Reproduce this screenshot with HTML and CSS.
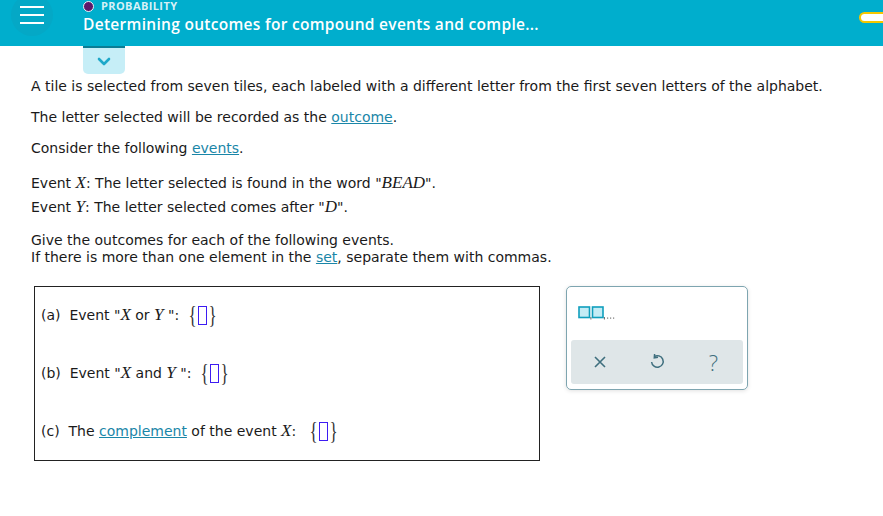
FILE: index.html
```html
<!DOCTYPE html>
<html>
<head>
<meta charset="utf-8">
<link rel="stylesheet" href="styles.css">
</head>
<body>
<header class="topbar">
  <div class="menu">
    <svg width="26" height="20" viewBox="0 0 26 20"><g fill="#fff"><rect x="0" y="1" width="24" height="2"/><rect x="0" y="9" width="24" height="2"/><rect x="0" y="17" width="24" height="2"/></g></svg>
  </div>
  <div class="titles">
    <div class="topic"><span class="dot"></span>PROBABILITY</div>
    <div class="title">Determining outcomes for compound events and comple...</div>
  </div>
  <div class="pill"></div>
</header>
<div class="tabrow">
  <div class="tab">
    <svg width="14" height="9" viewBox="0 0 14 9"><path d="M2 2 L7 7 L12 2" fill="none" stroke="#1ea8c9" stroke-width="2.6" stroke-linecap="round" stroke-linejoin="round"/></svg>
  </div>
</div>
<main class="content">
  <p class="para">A tile is selected from seven tiles, each labeled with a different letter from the first seven letters of the alphabet.</p>
  <p class="para">The letter selected will be recorded as the <a class="lnk">outcome</a>.</p>
  <p class="para">Consider the following <a class="lnk">events</a>.</p>
  <div class="events">
    <div>Event <i class="m">X</i>: The letter selected is found in the word "<i class="m">BEAD</i>".</div>
    <div>Event <i class="m">Y</i>: The letter selected comes after "<i class="m">D</i>".</div>
  </div>
  <div class="instr">
    <div>Give the outcomes for each of the following events.</div>
    <div>If there is more than one element in the <a class="lnk">set</a>, separate them with commas.</div>
  </div>
  <div class="work">
    <div class="answers">
      <div class="q">(a)&nbsp; Event "<i class="m">X</i> or <i class="m">Y</i> ": <span class="set"><span class="br">{</span><span class="slot"></span><span class="br">}</span></span></div>
      <div class="q">(b)&nbsp; Event "<i class="m">X</i> and <i class="m">Y</i> ": <span class="set"><span class="br">{</span><span class="slot"></span><span class="br">}</span></span></div>
      <div class="q">(c)&nbsp; The <a class="lnk">complement</a> of the event <i class="m">X</i>: &nbsp;<span class="set"><span class="br">{</span><span class="slot"></span><span class="br">}</span></span></div>
    </div>
    <div class="pad">
      <div class="padtop">
        <svg class="tmpl" width="42" height="15" viewBox="0 0 42 15"><rect x="1" y="1" width="10.5" height="10.5" fill="#c4ecf5" stroke="#109fbd" stroke-width="1.6"/><rect x="14.5" y="1" width="10.5" height="10.5" fill="#c4ecf5" stroke="#109fbd" stroke-width="1.6"/><rect x="12.4" y="11" width="1" height="2.5" fill="#666"/><rect x="25.9" y="11" width="1" height="2.5" fill="#666"/><g fill="#777"><rect x="29" y="11.5" width="1.2" height="1.2"/><rect x="32" y="11.5" width="1.2" height="1.2"/><rect x="35" y="11.5" width="1.2" height="1.2"/></g></svg>
      </div>
      <div class="padbtns">
        <span class="btn"><svg width="14" height="14" viewBox="0 0 14 14"><path d="M2 2 L12 12 M12 2 L2 12" stroke="#3f6f7e" stroke-width="1.6"/></svg></span>
        <span class="btn"><svg width="16" height="18" viewBox="0 0 16 18"><path d="M5.2 3.6 A5.8 5.8 0 1 1 2.6 9" fill="none" stroke="#3f6f7e" stroke-width="1.5"/><path d="M5.6 1 L5.3 4.8 L9 4.2" fill="none" stroke="#3f6f7e" stroke-width="1.5"/></svg></span>
        <span class="btn qm">?</span>
      </div>
    </div>
  </div>
</main>
</body>
</html>
```
FILE: styles.css
```css
* { box-sizing: border-box; }
body {
  margin: 0;
  background: #fff;
  font-family: "DejaVu Sans", Verdana, sans-serif;
  font-size: 14px;
  color: #1a1a1a;
  width: 883px;
  height: 516px;
  overflow: hidden;
}
.topbar {
  height: 46px;
  background: #00aecd;
  display: flex;
  align-items: flex-start;
  position: relative;
}
.menu {
  width: 42px;
  height: 42px;
  margin: -6px 0 0 11px;
  border-radius: 50%;
  background: #04a8c6;
  display: flex;
  align-items: center;
  justify-content: center;
  padding-left: 2px;
}
.titles {
  margin-left: 30px;
  margin-top: 0;
  color: #fff;
  font-family: "Open Sans", sans-serif;
}
.topic {
  display: flex;
  align-items: center;
  font-size: 11px;
  line-height: 12px;
  font-weight: 700;
  color: #d6f1f7;
  letter-spacing: 0.4px;
  height: 12px;
}
.dot {
  width: 11px;
  height: 11px;
  border-radius: 50%;
  background: #5c1869;
  border: 1.5px solid #e8f6f9;
  margin-right: 7px;
}
.title {
  font-size: 15.5px;
  font-weight: 600;
  letter-spacing: 0.3px;
  margin-top: 1px;
}
.pill {
  position: absolute;
  right: -10px;
  top: 12px;
  width: 34px;
  height: 11px;
  border: 2px solid #f6c700;
  border-radius: 6px;
  background: #fff;
}
.tabrow {
  padding-left: 83px;
  height: 28px;
}
.tab {
  width: 42px;
  height: 28px;
  background: #c6eef7;
  border-top: 2px solid #0a7d95;
  border-radius: 0 0 5px 5px;
  display: flex;
  align-items: center;
  justify-content: center;
}
.content {
  padding: 3px 0 0 31px;
}
.para {
  margin: 0 0 13px;
  line-height: 18px;
}
.lnk {
  color: #1a86a8;
  text-decoration: underline;
}
.m {
  font-family: "Liberation Serif", "Times New Roman", serif;
  font-size: 17px;
}
.events {
  margin-top: 14px;
  line-height: 24px;
}
.instr {
  margin-top: 13px;
  line-height: 17px;
}
.work {
  display: flex;
  align-items: flex-start;
  margin-top: 20px;
  margin-left: 3px;
}
.answers {
  width: 506px;
  height: 175px;
  border: 1px solid #222;
  padding: 16px 0 0 6px;
  display: flex;
  flex-direction: column;
  gap: 34px;
}
.q {
  height: 24px;
  display: flex;
  align-items: center;
  white-space: pre;
}
.set {
  display: inline-flex;
  align-items: center;
  margin-left: 4px;
}
.br {
  font-family: "Liberation Serif", serif;
  font-size: 19px;
  line-height: 24px;
  color: #333;
  transform: scale(0.9, 1.3);
}
.slot {
  width: 9px;
  height: 19px;
  border: 1.2px solid #3d1cf2;
  margin: 0 1px;
}
.pad {
  margin-left: 26px;
  width: 182px;
  height: 104px;
  border: 1px solid #7ea5b0;
  border-radius: 5px;
  box-shadow: 0 1px 4px rgba(0,0,0,0.12);
  padding: 4px;
}
.padtop {
  height: 49px;
  padding: 15px 0 0 7px;
}
.tmpl {
  display: block;
}
.padbtns {
  height: 44px;
  background: #dfe6e8;
  border-radius: 3px;
  display: grid;
  grid-template-columns: 57px 57px 57px;
  align-items: center;
}
.btn {
  display: flex;
  justify-content: center;
  align-items: center;
}
.qm {
  font-family: "Open Sans", sans-serif;
  font-size: 22px;
  color: #3f6f7e;
  font-weight: 300;
}
```
